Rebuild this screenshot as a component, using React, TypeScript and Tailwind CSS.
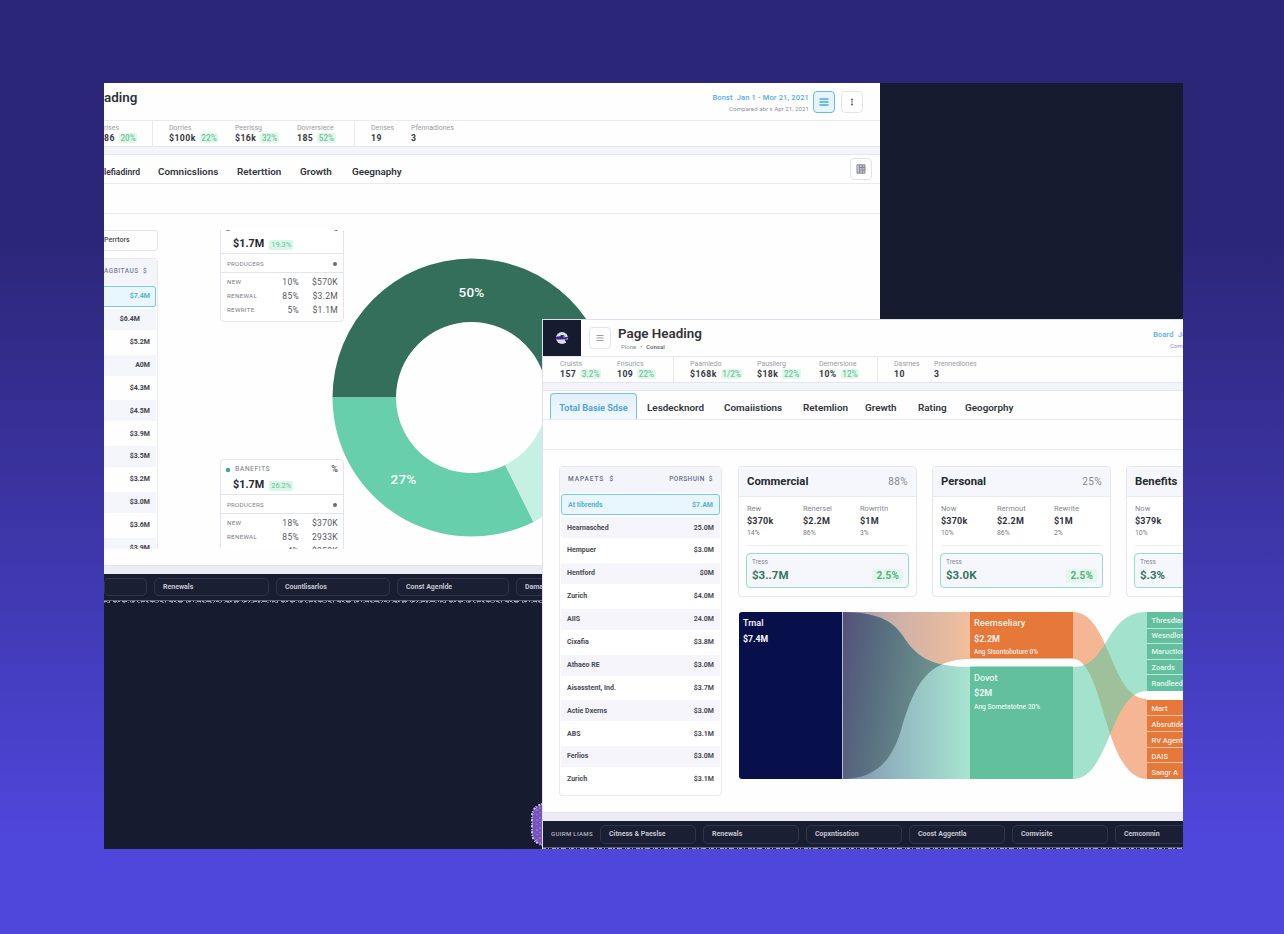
import { ReactNode } from 'react'

interface Stat {
  label: string
  value: string
  change?: string
  width: string
  divider?: boolean
}

const backStats: Stat[] = [
  { label: 'rises', value: '86', change: '20%', width: 'w-[48px]' },
  { label: 'Dorries', value: '$100k', change: '22%', width: 'w-[66px]', divider: true },
  { label: 'Peerissg', value: '$16k', change: '32%', width: 'w-[62px]' },
  { label: 'Dovrersiece', value: '185', change: '52%', width: 'w-[57px]' },
  { label: 'Denses', value: '19', width: 'w-[40px]', divider: true },
  { label: 'Pfennadiones', value: '3', width: 'w-[60px]' },
]

const frontStats: Stat[] = [
  { label: 'Cruists', value: '157', change: '3.2%', width: 'w-[57px]' },
  { label: 'Fnsurics', value: '109', change: '22%', width: 'w-[56px]' },
  { label: 'Paamiedo', value: '$168k', change: '1/2%', width: 'w-[67px]', divider: true },
  { label: 'Pauslierg', value: '$18k', change: '22%', width: 'w-[62px]' },
  { label: 'Demersione', value: '10%', change: '12%', width: 'w-[58px]' },
  { label: 'Dasrnes', value: '10', width: 'w-[40px]', divider: true },
  { label: 'Prennediones', value: '3', width: 'w-[60px]' },
]

const markets = [
  ['At tibrends', '$7.AM'],
  ['Hearnasched', '25.0M'],
  ['Hempuer', '$3.0M'],
  ['Hentford', '$0M'],
  ['Zurich', '$4.0M'],
  ['AIIS', '24.0M'],
  ['Cixafia', '$3.8M'],
  ['Athaeo RE', '$3.0M'],
  ['Aisasstent, Ind.', '$3.7M'],
  ['Actie Dxerns', '$3.0M'],
  ['ABS', '$3.1M'],
  ['Ferlios', '$3.0M'],
  ['Zurich', '$3.1M'],
]

const backMarkets = [
  '$7.4M', '$6.4M', '$5.2M', 'A0M', '$4.3M', '$4.5M', '$3.9M',
  '$3.5M', '$3.2M', '$3.0M', '$3.6M', '$3.9M',
]

const segments = [
  { name: 'Commercial', share: '88%', labels: ['Rew', 'Renersel', 'Rowrritn'], values: ['$370k', '$2.2M', '$1M'], pcts: ['14%', '86%', '3%'], total: '$3..7M', change: '2.5%' },
  { name: 'Personal', share: '25%', labels: ['Now', 'Rermout', 'Rewrite'], values: ['$370k', '$2.2M', '$1M'], pcts: ['10%', '86%', '2%'], total: '$3.0K', change: '2.5%' },
  { name: 'Benefits', share: '25%', labels: ['Now', 'Rermout', 'Rewrite'], values: ['$379k', '$2.2M', '$1M'], pcts: ['10%', '86%', '2%'], total: '$.3%', change: '2.5%' },
]

function StatItem({ label, value, change, width, divider }: Stat) {
  return (
    <div className={`flex h-[25px] shrink-0 flex-col pt-[3px] ${divider ? 'border-l border-[#e6e8f3] box-content pl-4' : ''} ${width}`}>
      <span className="h-[8px] text-[7px] leading-[8px] whitespace-nowrap text-[#999ca9]">{label}</span>
      <div className="flex h-[12px] items-center gap-[4px]">
        <span className="text-[8.7px] leading-none font-bold tracking-[0.45px] text-[#35383f]">{value}</span>
        {change && (
          <span className="rounded-[2px] bg-[#e3f8ed] px-[1.5px] text-[8.2px] leading-[10px] font-medium text-[#6dc79c]">{change}</span>
        )}
      </div>
    </div>
  )
}

function IconButton({ active = false, children }: { active?: boolean; children: ReactNode }) {
  return (
    <div className={`flex size-[22px] shrink-0 items-center justify-center rounded-[4px] border ${active ? 'border-[#6dbbe6] bg-[#e5f4fd]' : 'border-[#e2e3ed] bg-white'}`}>
      {children}
    </div>
  )
}

function Lines({ color, size = 10 }: { color: string; size?: number }) {
  return (
    <svg width={size} height={size} viewBox="0 0 10 10" stroke={color} strokeWidth="1.3">
      <path d="M.5 2h9M.5 5h9M.5 8h9" />
    </svg>
  )
}

function Tab({ children }: { children: ReactNode }) {
  return <span className="shrink-0 text-[9.9px] leading-none font-semibold whitespace-nowrap text-[#30343c]">{children}</span>
}

function FooterPill({ children }: { children?: ReactNode }) {
  return (
    <div className="flex h-full items-center rounded-[5px] border border-[#30354c] bg-[#1b1f34] px-[8px] text-[7px] leading-none font-bold whitespace-nowrap text-[#c3c5cf]">
      {children}
    </div>
  )
}

// Speckled strip along the lower window edges
function Speckle({ width }: { width: number }) {
  return (
    <svg className="block shrink-0 bg-[#171b2f]" width={width} height="4" viewBox={`0 0 ${width} 4`} strokeWidth="1">
      <path d={`M0 .5H${width}`} stroke="#5f6377" />
      <path d={`M0 1.5H${width}`} stroke="#a3a6b4" strokeDasharray="3 2 1 3 4 1 2 2 5 3 1 1" />
      <path d={`M0 2.5H${width}`} stroke="#6e7285" strokeDasharray="1 2 3 4 2 1 1 5 2 3" />
    </svg>
  )
}

function polar(r: number, deg: number) {
  const a = (deg * Math.PI) / 180
  return `${139.5 + r * Math.cos(a)} ${139.5 + r * Math.sin(a)}`
}

function slice(from: number, to: number) {
  const large = to - from > 180 ? 1 : 0
  return `M${polar(139, from)}A139 139 0 ${large} 1 ${polar(139, to)}L${polar(75.5, to)}A75.5 75.5 0 ${large} 0 ${polar(75.5, from)}Z`
}

function Donut() {
  return (
    <svg className="-ml-[12px] mt-[28px] shrink-0" width="280" height="280" viewBox="0 0 280 280">
      <path d={slice(180, 360)} fill="#346f5c" />
      <path d={slice(63.5, 180)} fill="#67cfac" />
      <path d={slice(0, 63.5)} fill="#c6f0e2" />
      <g fill="#fff" fontSize="13.5" fontWeight="500" textAnchor="middle" letterSpacing=".3">
        <text x="139.5" y="38.500">50%</text>
        <text x="71.5" y="226">27%</text>
      </g>
    </svg>
  )
}

interface BreakdownProps {
  title: string
  change: string
  caption: string
  rows: string[][]
}

function Breakdown({ title, change, caption, rows }: BreakdownProps) {
  return (
    <div className="h-[104px] w-[124px] rounded-[4px] border border-[#e3e4ee] bg-white leading-none">
      <div className="flex h-[19px] items-center px-[5px] text-[7px] tracking-[0.4px] text-[#7d808d]">
        <span className="mr-[5px] size-[4px] rounded-[1px] bg-[#3fae86]" />
        {title}
        <span className="ml-auto text-[9px] font-medium tracking-normal text-[#454850]">%</span>
      </div>
      <div className="flex h-[16px] items-center gap-[5px] border-b border-[#e3e4ee] pb-[2px] pl-[12px]">
        <span className="text-[10.8px] font-bold text-[#25282e]">$1.7M</span>
        <span className="rounded-[2px] bg-[#d9f7e8] px-[2px] text-[7.5px] leading-[10px] text-[#65c499]">{change}</span>
      </div>
      <div className="flex h-[19px] items-center justify-between border-b border-[#e3e4ee] px-[6px] pt-[2px] text-[6.2px] tracking-[0.2px] text-[#7d808d]">
        {caption}
        <span className="size-[4px] rounded-full bg-[#686b76]" />
      </div>
      <div className="pt-[2px]">
        {rows.map(([name, pct, value]) => (
          <div key={name} className="flex h-[14px] items-center pr-[5px] pl-[6px] text-[8.5px] tracking-[0.3px] text-[#555861]">
            <span className="w-[40px] text-[6.2px] whitespace-nowrap text-[#777a87]">{name}</span>
            <span className="w-[32px] text-right">{pct}</span>
            <span className="ml-auto">{value}</span>
          </div>
        ))}
      </div>
    </div>
  )
}

function BackWindow() {
  return (
    <div className="absolute top-0 left-0 flex h-[521px] w-[776px] flex-col overflow-hidden bg-[#fefefe]">
      <header className="flex h-[38px] shrink-0 items-center border-b border-[#e8e9f4] pr-[17px]">
        <h1 className="-mt-[7px] text-[13.4px] font-semibold text-[#303238]">ading</h1>
        <div className="mr-[4px] ml-auto text-right leading-none">
          <div className="mt-[3px] text-[7.5px] font-medium tracking-[0.15px] text-[#58addc]">Bonst&nbsp; Jan 1 - Mor 21, 2021</div>
          <div className="mt-[4px] text-[6.2px] text-[#92959f]">Compared abr x Apr 21, 2021</div>
        </div>
        <IconButton active><Lines color="#4ba8dc" /></IconButton>
        <div className="w-[6px]" />
        <IconButton>
          <svg width="6" height="10" viewBox="0 0 6 10" fill="#555966">
            <path d="M3 1 4.200 3H3.400v4h.8L3 9 1.800 7h.8V3H1.800z" />
          </svg>
        </IconButton>
      </header>
      <div className="flex h-[25px] shrink-0 overflow-hidden">
        {backStats.map((s) => <StatItem key={s.label} {...s} />)}
      </div>
      <div className="h-[9px] shrink-0 border-y border-[#e5e6f2] bg-[#f4f5fa]" />
      <nav className="flex h-[29px] shrink-0 items-center border-b border-[#e8e9f4] pr-[8px]">
        <div className="grid grid-cols-[54px_79px_63px_52px_60px] items-center pt-[6px] leading-none">
          <span className="text-[8.5px] leading-none font-semibold text-[#30343c]">lefiadinrd</span>
          <Tab>Comnicslions</Tab>
          <Tab>Reterttion</Tab>
          <Tab>Growth</Tab>
          <Tab>Geegnaphy</Tab>
        </div>
        <div className="ml-auto">
          <IconButton>
            <svg width="10" height="10" viewBox="0 0 10 10" fill="#c6c8d4" stroke="#858998">
              <path d="M1 .8h8v8.400H1zM3.600 1v8M6.400 1v8M3.600 3.500H9M3.600 6H9" />
            </svg>
          </IconButton>
        </div>
      </nav>
      <div className="h-[30px] shrink-0 border-b border-[#e8e9f4]" />
      <main className="mt-[16px] flex h-[319px] shrink-0 items-start overflow-hidden">
        <div className="w-[54px] shrink-0">
          <div className="flex h-[21px] items-center rounded-r-[4px] border border-l-0 border-[#e3e4ee] text-[7px] font-medium text-[#454850]">Perrtors</div>
          <div className="mt-[7px] h-[300px] rounded-tr-[4px] border-t border-r border-[#e8e9f2]">
            <div className="flex h-[26px] items-center overflow-hidden bg-[#f4f5fb] text-[6.5px] font-medium tracking-[0.5px] whitespace-nowrap text-[#7b7d99]">AGBITAUS &nbsp;$</div>
            {backMarkets.map((value, i) => (
              <div key={i} className="h-[22.9px] pt-[1px] pr-[1px]">
                <div
                  className={`flex h-[21px] items-center justify-end text-[7px] font-bold ${
                    i === 0
                      ? 'rounded-r-[3px] border border-l-0 border-[#77cbd8] bg-[#eaf6fd] pr-[5px] text-[#52afd9]'
                      : i % 2 ? 'bg-[#f5f5fc] pr-[6px] text-[#3f424b]' : 'pr-[6px] text-[#3f424b]'
                  }`}
                >
                  <span className={i === 1 ? 'mr-[10px]' : ''}>{value}</span>
                </div>
              </div>
            ))}
          </div>
        </div>
        <div className="-mt-[12px] ml-[62px] flex shrink-0 flex-col gap-[137px]">
          <Breakdown
            title="COMMERCIAL"
            change="19.3%"
            caption="PRODUCERS"
            rows={[['NEW', '10%', '$570K'], ['RENEWAL', '85%', '$3.2M'], ['REWRITE', '5%', '$1.1M']]}
          />
          <Breakdown
            title="BANEFITS"
            change="26.2%"
            caption="PRODUCERS"
            rows={[['NEW', '18%', '$370K'], ['RENEWAL', '85%', '2933K'], ['REWRITE', '4%', '$350K']]}
          />
        </div>
        <Donut />
      </main>
      <div className="mt-auto h-[9px] shrink-0 border-t border-[#e5e5f0] bg-[#ececf5]" />
      <footer className="grid h-[26px] shrink-0 grid-cols-[43px_115px_114px_112px_115px] gap-[7px] bg-[#191d32] py-[4px]">
        <FooterPill />
        <FooterPill>Renewals</FooterPill>
        <FooterPill>Countlisarlos</FooterPill>
        <FooterPill>Const Agenlde</FooterPill>
        <FooterPill>Dama</FooterPill>
      </footer>
      <Speckle width={776} />
    </div>
  )
}

function MarketTable() {
  return (
    <div className="h-[330px] w-[163px] shrink-0 rounded-[4px] border border-[#e8e9f2] bg-white">
      <div className="flex h-[26px] items-center justify-between bg-[#f4f5fb] px-[8px] text-[6.5px] font-medium text-[#696b85]">
        <span className="tracking-[0.95px]">MAPAETS &nbsp;$</span>
        <span className="tracking-[0.45px]">PORSHUIN &nbsp;$</span>
      </div>
      {markets.map(([name, value], i) => (
        <div key={i} className="h-[22.9px] px-[1px] pt-[1.4px]">
          <div
            className={`flex h-[21px] items-center justify-between px-[6px] text-[7px] font-bold ${
              i === 0
                ? 'rounded-[3px] border border-[#77cbd8] bg-[#eaf6fd] text-[#52afd9]'
                : i % 2 ? 'bg-[#f5f5fb] text-[#484b55]' : 'text-[#484b55]'
            }`}
          >
            <span>{name}</span>
            <span>{value}</span>
          </div>
        </div>
      ))}
    </div>
  )
}

function SegmentCard({ name, share, labels, values, pcts, total, change }: (typeof segments)[number]) {
  return (
    <div className="h-[131px] w-[179px] shrink-0 rounded-[4px] border border-[#e5e6f0] bg-white leading-none">
      <div className="flex h-[30px] items-center justify-between rounded-t-[4px] border-b border-[#e8e9f4] bg-[#f6f7fd] px-[8px]">
        <span className="text-[11.3px] font-bold text-[#262930]">{name}</span>
        <span className="text-[10px] tracking-[0.4px] text-[#858698]">{share}</span>
      </div>
      <div className="mx-[8px] grid h-[49px] grid-cols-[56px_57px_auto] border-b border-[#ededf2] pt-[8px]">
        {labels.map((label, i) => (
          <div key={label}>
            <div className="text-[7.5px] text-[#858894]">{label}</div>
            <div className="mt-[4px] text-[9px] font-bold tracking-[0.2px] text-[#30333b]">{values[i]}</div>
            <div className="mt-[4px] text-[6.8px] text-[#777a85]">{pcts[i]}</div>
          </div>
        ))}
      </div>
      <div className="mx-[7px] mt-[7px] h-[35px] rounded-[4px] border border-[#94dfc4] bg-[#f6f7fd] px-[5px] pt-[5px]">
        <div className="text-[6.5px] text-[#858894]">Tress</div>
        <div className="flex h-[21px] items-center justify-between">
          <span className="text-[11.5px] font-bold text-[#34745e]">{total}</span>
          <span className="rounded-[2px] bg-[#e3f7ed] px-[4px] text-[10px] leading-[14px] font-bold tracking-[0.2px] text-[#51b27e]">{change}</span>
        </div>
      </div>
    </div>
  )
}

const sankeyTop = ['Thresdian', 'Wesndlos', 'Maructions', 'Zoards', 'Randleed']
const sankeyBottom = ['Mart', 'Absrutide', 'RV Agents', 'DAIS', 'Sangr A']

const orangeFlow = 'M103 0H231V47C188 47 176 74 164 111C156 142 142 167 103 167Z'
const greenFlow = 'M103 0C142 0 155 11 164 24C176 43 190 55 231 55V167H103Z'

function Sankey() {
  return (
    <svg className="block shrink-0" width="445" height="168" viewBox="0 0 445 168">
      <defs>
        <linearGradient id="toOrange">
          <stop offset="0" stopColor="#9a94a8" />
          <stop offset=".4" stopColor="#cdafa8" />
          <stop offset="1" stopColor="#f1bf9c" />
        </linearGradient>
        <linearGradient id="toGreen">
          <stop offset="0" stopColor="#7f8fab" />
          <stop offset=".45" stopColor="#93bac1" />
          <stop offset="1" stopColor="#a7e5d0" />
        </linearGradient>
        <linearGradient id="blend" x2="1" y2=".2">
          <stop offset="0" stopColor="#545079" />
          <stop offset=".35" stopColor="#587080" />
          <stop offset=".75" stopColor="#6c918d" />
        </linearGradient>
        <clipPath id="orangeClip">
          <path d={orangeFlow} />
        </clipPath>
      </defs>
      <path d={orangeFlow} fill="url(#toOrange)" />
      <path d={greenFlow} fill="url(#toGreen)" />
      <path d={greenFlow} fill="url(#blend)" clipPath="url(#orangeClip)" />
      <path d="M334 0C371 0 371 87 408 87V167C365 167 365 47 334 47Z" fill="#ec7d42" opacity=".56" />
      <path d="M334 55C371 55 365 0 408 0V79C371 79 371 167 334 167Z" fill="#4fc99f" opacity=".52" />
      <path d="M3 0H103V167H3a3 3 0 0 1-3-3V3a3 3 0 0 1 3-3Z" fill="#07104a" />
      <path d="M103.500 0V167" stroke="#b9bccb" />
      <path d="M231 0H334V46.500H231z" fill="#e6783a" />
      <path d="M231 54.500H334V167H231z" fill="#62c09e" />
      <path d="M408 0H445V79H408z" fill="#62c09e" />
      <path d="M408 88H445V167H408z" fill="#e6783a" />
      <path d="M408 16.500h37M408 31.500h37M408 47.500h37M408 62.500h37" stroke="#b9e8d6" />
      <path d="M408 103.500h37M408 119.500h37M408 135.500h37M408 150.500h37" stroke="#f5c3a2" />
      <g fill="#fff" fontSize="9" fontWeight="500">
        <text x="4" y="14">Trnal</text>
        <text x="4" y="29.500" fontSize="8.700" fontWeight="700">$7.4M</text>
        <g opacity=".88">
          <text x="235" y="14" fontSize="9.300">Reemseliary</text>
          <text x="235" y="29.500" fontWeight="700">$2.2M</text>
          <text x="235" y="42" fontSize="6.500">Ang Sisontobuture 0%</text>
          <text x="235" y="68.500">Dovot</text>
          <text x="235" y="84" fontWeight="700">$2M</text>
          <text x="235" y="96.500" fontSize="6.700">Ang Sometatotne 20%</text>
        </g>
        <g fontSize="7.500" opacity=".85">
          {sankeyTop.map((t, i) => <text key={t} x="412.500" y={10.5 + i * 15.8}>{t}</text>)}
          {sankeyBottom.map((t, i) => <text key={t} x="412.500" y={98.5 + i * 16}>{t}</text>)}
        </g>
      </g>
    </svg>
  )
}

function FrontWindow() {
  return (
    <div className="absolute top-[236px] left-[438px] flex h-[532px] w-[641px] flex-col overflow-hidden border-t border-l border-[#dfe0e9] bg-[#fefefe]">
      <header className="flex h-[37px] shrink-0 border-b border-[#e8e9f4]">
        <div className="flex w-[38px] items-center justify-center bg-[#171b2f]">
          <svg width="14" height="14" viewBox="0 0 14 14">
            <circle cx="7" cy="7" r="6" fill="#dddcf2" />
            <path d="M0 7.400C3 3.500 6 7.500 14 5.600 12.500 9 9 8.300 5 8.600 3 8.700 1.500 8.400 0 7.400Z" fill="#3b2594" />
            <path d="M4 5.500Q7 2.500 10 5.200L7 6.100Z" fill="#171b2f" />
            <path d="M9.500 8.500H14V11H11Z" fill="#171b2f" />
          </svg>
        </div>
        <div className="ml-[8px] flex items-center"><IconButton><Lines color="#9b9eaa" size={8} /></IconButton></div>
        <div className="ml-[7px] pt-[6px]">
          <h1 className="text-[13.4px] leading-[16px] font-semibold text-[#303238]">Page Heading</h1>
          <div className="mt-[1px] ml-[3px] flex gap-[4px] text-[6px] leading-[7px] text-[#8c8f99]">
            <span>Plone</span>
            <span>•</span>
            <span className="font-medium text-[#5f626b]">Consal</span>
          </div>
        </div>
        <div className="-mr-[67px] ml-auto pt-[11px] text-right leading-none whitespace-nowrap">
          <div className="text-[7.5px] font-medium tracking-[0.15px] text-[#58addc]">Board&nbsp; Jan 1 - Mor 21, 2021</div>
          <div className="mt-[4px] text-[6.2px] text-[#92959f]">Compared abr x Apr 21, 2021</div>
        </div>
      </header>
      <div className="flex h-[25px] shrink-0 pl-[17px]">
        {frontStats.map((s) => <StatItem key={s.label} {...s} />)}
      </div>
      <div className="h-[9px] shrink-0 border-y border-[#e5e6f2] bg-[#f4f5fa]" />
      <nav className="flex h-[29px] shrink-0 items-center gap-[10px] border-b border-[#e8e9f4] pl-[7px]">
        <div className="flex h-[26px] w-[87px] items-center justify-center self-end rounded-t-[4px] border border-b-0 border-[#7cbce0] bg-linear-to-b from-[#e1f0fb] to-[#f1f9ff] pt-[2px] text-[9.2px] leading-none font-semibold whitespace-nowrap text-[#4b9fdc]">
          Total Basie Sdse
        </div>
        <div className="grid grid-cols-[77px_79px_62px_53px_47px_60px] pt-[6px] leading-none">
          <Tab>Lesdecknord</Tab>
          <Tab>Comaiistions</Tab>
          <Tab>Retemlion</Tab>
          <Tab>Grewth</Tab>
          <Tab>Rating</Tab>
          <Tab>Geogorphy</Tab>
        </div>
      </nav>
      <div className="h-[30px] shrink-0 border-b border-[#e8e9f4]" />
      <main className="flex gap-[16px] pt-[16px] pl-[16px]">
        <MarketTable />
        <div className="shrink-0">
          <div className="flex gap-[15px]">
            {segments.map((s) => <SegmentCard key={s.name} {...s} />)}
          </div>
          <div className="mt-[15px] ml-px"><Sankey /></div>
        </div>
      </main>
      <div className="mt-auto h-[9px] shrink-0 border-t border-[#e5e5f0] bg-[#ececf5]" />
      <footer className="flex h-[26px] shrink-0 items-center bg-[#191d32] py-[3.5px] pl-[8px]">
        <span className="w-[49px] shrink-0 text-[6.1px] font-medium tracking-[0.3px] whitespace-nowrap text-[#b3b5c2]">GUIRM LIAMS</span>
        <div className="grid h-full shrink-0 grid-cols-[repeat(6,96px)] gap-[7px]">
          <FooterPill>Citness &amp; Paeslse</FooterPill>
          <FooterPill>Renewals</FooterPill>
          <FooterPill>Copxntisation</FooterPill>
          <FooterPill>Coost Aggentla</FooterPill>
          <FooterPill>Comvisite</FooterPill>
          <FooterPill>Cemconnin</FooterPill>
        </div>
      </footer>
      <Speckle width={641} />
    </div>
  )
}

export default function App() {
  return (
    <div className="h-[934px] w-[1284px] overflow-hidden bg-linear-to-b from-[#2b2678] from-25% to-[#4f46dc] to-90% pt-[83px] pl-[104px] font-['Roboto',sans-serif]">
      <div className="relative h-[766px] w-[1079px] overflow-hidden bg-[#171b2f]">
        <BackWindow />
        <svg className="absolute top-[716px] left-[424px]" width="30" height="50" viewBox="0 0 30 50">
          <rect x="4" y="5" width="40" height="41" rx="12" fill="#7953bd" />
          <rect x="4" y="5" width="40" height="41" rx="12" fill="none" stroke="#cfcbe6" strokeWidth="2" strokeDasharray="1 2 2 1" />
          <path d="M9 10v32M12 8v36" stroke="#a98bdc" strokeDasharray="2 3 1 4" />
        </svg>
        <FrontWindow />
      </div>
    </div>
  )
}
